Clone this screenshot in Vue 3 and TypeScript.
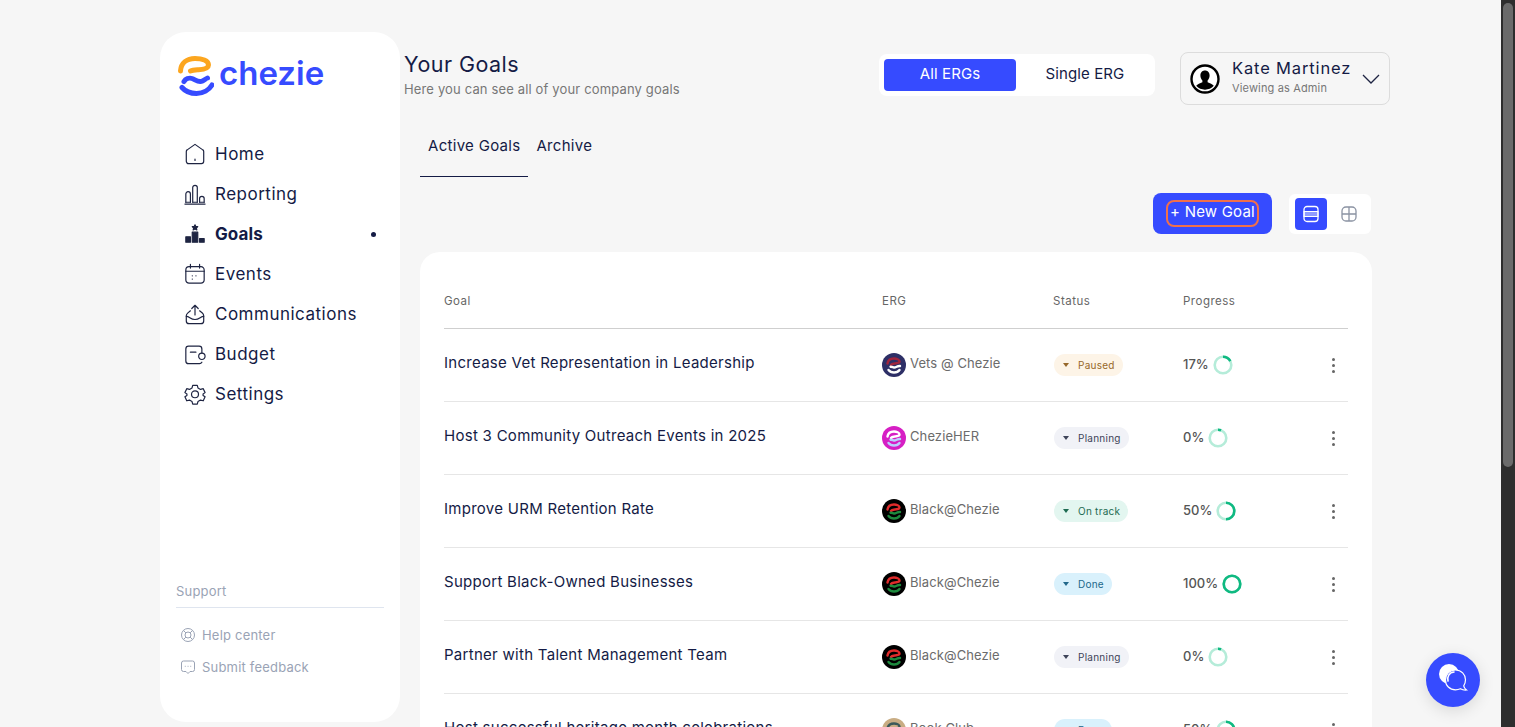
<template>
  <div class="shell">
    <div class="page">
      <aside class="sidebar">
        <div class="logo">
          <svg class="logo-mark" viewBox="0 0 36 40" fill="none" stroke-width="5" stroke-linecap="round" stroke-linejoin="round">
            <path stroke="#fca61f" d="M2.500 15C3 7 9 2.500 17 2.500c7 0 13.500 2 13.500 6.500 0 4-6 4.500-10 4.800-3 .2-6 .3-8 1.200" />
            <path stroke="#364bff" d="M6 25.500c1.500-2.500 5-4 8-3 3.500 1.200 6.500 4.500 10.500 2.500 2-1 3.500-2.500 5-3" />
            <path stroke="#364bff" d="M4 31.500c3 3.500 9 6 14.500 6 6.500 0 12.500-3.500 15.500-8.500" />
          </svg>
          <span class="logo-text">chezie</span>
        </div>

        <nav class="nav">
          <a v-for="item in navItems" :key="item.label" class="nav-item" :class="{ 'nav-item--active': item.active }">
            <svg class="nav-icon" viewBox="0 0 24 24" fill="none" stroke="#1e2442" stroke-width="1.3" stroke-linecap="round" stroke-linejoin="round">
              <path v-for="d in item.paths" :key="d" :d="d" />
              <path v-if="item.active" fill="#1e2442" d="M12 2l1 2h2l-1.500 1.500.5 2-2-1-2 1 .5-2L9 4h2zM9 10h6v11H9zM2 15h5v6H2zM17 17h5v4h-5z" />
            </svg>
            <span>{{ item.label }}</span>
            <i v-if="item.active" class="nav-dot" />
          </a>
        </nav>

        <div class="support">
          <div class="support-title">Support</div>
          <a class="support-link">
            <svg viewBox="0 0 16 16" fill="none" stroke="#9aa3b5" stroke-width="1">
              <circle cx="8" cy="8" r="6.500" />
              <circle cx="8" cy="8" r="3" />
              <path d="M3.500 3.500l2.400 2.400M12.500 3.500l-2.400 2.400M3.500 12.500l2.400-2.400M12.500 12.500l-2.400-2.400" />
            </svg>
            Help center
          </a>
          <a class="support-link">
            <svg viewBox="0 0 16 16" fill="none" stroke="#9aa3b5" stroke-width="1" stroke-linejoin="round">
              <path d="M3.500 2h9A2 2 0 0 1 14.500 4v6.500a2 2 0 0 1-2 2H10L8 14.500 6 12.500H3.500a2 2 0 0 1-2-2V4a2 2 0 0 1 2-2z" />
              <path stroke-linecap="round" d="M5.200 7.300h.1M8 7.300h.1M10.700 7.300h.1" />
            </svg>
            Submit feedback
          </a>
        </div>
      </aside>

      <main class="main">
        <header class="topbar">
          <div class="heading">
            <h1>Your Goals</h1>
            <p>Here you can see all of your company goals</p>
          </div>
          <div class="segmented">
            <button class="segment segment--active">All ERGs</button>
            <button class="segment">Single ERG</button>
          </div>
          <div class="user">
            <svg class="user-avatar" viewBox="0 0 30 30">
              <circle cx="15" cy="15" r="13.500" fill="#fff" stroke="#000" stroke-width="2.400" />
              <path d="M15 6.500c-3 0-4.600 2.300-4.600 5 0 2 .8 3.800 2 5v1.700c-2.300 1-5 1.800-6.200 3.600a12 12 0 0 0 17.600 0c-1.200-1.800-3.900-2.600-6.200-3.600v-1.700c1.200-1.200 2-3 2-5 0-2.700-1.600-5-4.600-5z" />
            </svg>
            <div class="user-text">
              <strong>Kate Martinez</strong>
              <span>Viewing as Admin</span>
            </div>
            <svg class="user-chevron" viewBox="0 0 18 10" fill="none" stroke="#1e2442" stroke-width="1.300">
              <path d="M1 1l8 8 8-8" />
            </svg>
          </div>
        </header>

        <div class="content">
          <div class="tabs">
            <a class="tab tab--active">Active Goals</a>
            <a class="tab">Archive</a>
          </div>

          <div class="actions">
            <button class="new-goal"><span>+ New Goal</span></button>
            <div class="view-toggle">
              <span class="view-btn view-btn--active">
                <svg viewBox="0 0 18 18" fill="none" stroke="#fff" stroke-width="1.300">
                  <rect x="2" y="1.500" width="14" height="15" rx="3" />
                  <rect x="2" y="6.500" width="14" height="5" fill="#fff" fill-opacity=".45" stroke-width="1" />
                </svg>
              </span>
              <span class="view-btn">
                <svg viewBox="0 0 18 18" fill="none" stroke="#8b93a3" stroke-width="1.300">
                  <rect x="2" y="2" width="14" height="14" rx="4" />
                  <path d="M9 2v14M2 9h14" />
                </svg>
              </span>
            </div>
          </div>

          <section class="card">
            <div class="row row--head">
              <span>Goal</span>
              <span>ERG</span>
              <span>Status</span>
              <span>Progress</span>
            </div>
            <div v-for="goal in goals" :key="goal.title" class="row">
              <span class="goal-title">{{ goal.title }}</span>
              <span class="erg">
                <svg class="erg-logo" viewBox="0 0 24 24" fill="none" stroke-width="2.400" stroke-linecap="round">
                  <circle cx="12" cy="12" r="12" :fill="ergColors[goal.erg].bg" stroke="none" />
                  <path :stroke="ergColors[goal.erg].top" d="M5.500 10.500C6 7 9 5.500 12 5.500c2.500 0 5.500 1 5.500 3s-3 1.500-5 2c-1.500.3-3 .7-3.500 1.500" />
                  <path :stroke="ergColors[goal.erg].low" d="M18 13c-2.500-.5-4 1.800-6 1.500-1.200-.2-2-1-3.500-.8M6.500 17c1.200 1.500 3.500 2.500 5.500 2.500s4.500-1 5.500-2.500" />
                </svg>
                <span class="erg-name">{{ goal.erg }}</span>
              </span>
              <span class="status-cell">
                <span class="badge" :class="`badge--${goal.status}`">
                  <i class="caret" /><span>{{ statusLabels[goal.status] }}</span>
                </span>
              </span>
              <span class="progress">
                <span class="progress-value">{{ goal.progress }}%</span>
                <svg class="ring" viewBox="0 0 20 20" fill="none" stroke-width="2.600">
                  <circle cx="10" cy="10" r="8.300" stroke="#b5ecd9" />
                  <circle
                    cx="10"
                    cy="10"
                    r="8.300"
                    stroke="#0fb981"
                    pathLength="100"
                    :stroke-dasharray="`${Math.max(goal.progress, 6)} 100`"
                    transform="rotate(-90 10 10)"
                  />
                </svg>
              </span>
              <span class="kebab"><i /><i /><i /></span>
            </div>
          </section>
        </div>
      </main>

      <button class="chat">
        <svg viewBox="0 0 54 54" fill="none">
          <circle cx="23" cy="21" r="10" fill="#fff" />
          <path fill="#364bff" stroke="#fff" stroke-width="1.200" d="M29.500 17c5.800 0 10 4.300 10 9.800 0 2.400-.6 4.300-1.800 6 .3 1.500 1.300 3 2.800 4.200-2.300.2-4.400-.3-6-1.300-1.500.7-3.200 1.100-5 1.100-5.800 0-10-4.200-10-9.900S23.700 17 29.500 17z" />
          <path stroke="#fff" stroke-width="1.600" stroke-linecap="round" d="M22 28c-1-4 1-8.500 6-9" />
        </svg>
      </button>
    </div>
    <div class="scrollbar"><div class="scrollbar-thumb" /></div>
  </div>
</template>

<script setup lang="ts">
type Status = 'paused' | 'planning' | 'track' | 'done'

interface Goal {
  title: string
  erg: string
  status: Status
  progress: number
}

const navItems = [
  {
    label: 'Home',
    paths: ['M12 1.500l8.500 6a2 2 0 0 1 1 1.700V20a2.500 2.500 0 0 1-2.500 2.500H5A2.500 2.500 0 0 1 2.500 20V9.200a2 2 0 0 1 1-1.700z', 'M12 17.500v1.500'],
  },
  {
    label: 'Reporting',
    paths: [
      'M1 23h22',
      'M2 21v-9a2.500 2.500 0 0 1 5 0v9',
      'M9.500 21V5a2.500 2.500 0 0 1 5 0v16',
      'M17 21v-4a2.500 2.500 0 0 1 5 0v4',
      'M2 21h5M9.500 21h5M17 21h5',
    ],
  },
  { label: 'Goals', active: true, paths: [] },
  {
    label: 'Events',
    paths: [
      'M5.500 4h13A3.500 3.500 0 0 1 22 7.500v11a3.500 3.500 0 0 1-3.500 3.500h-13A3.500 3.500 0 0 1 2 18.500v-11A3.500 3.500 0 0 1 5.500 4z',
      'M2 9h20M7 1.500v4M17 1.500v4',
      'M9 14h.1M13 14h.1M9 17.500h.1',
    ],
  },
  {
    label: 'Communications',
    paths: [
      'M7 8.500L4 11a4 4 0 0 0-1.500 3v5.500a3 3 0 0 0 3 3h13a3 3 0 0 0 3-3V14A4 4 0 0 0 20 11l-3-2.500',
      'M2.500 14.500c3.500 0 4.500 3.500 9.500 3.500s6-3.500 9.500-3.500',
      'M12 13V2.500M8.500 6L12 2.500 15.500 6',
    ],
  },
  {
    label: 'Budget',
    paths: [
      'M19.500 11V6.500a3 3 0 0 0-3-3H5a3 3 0 0 0-3 3v13a3 3 0 0 0 3 3h12a3 3 0 0 0 2.500-1.500',
      'M7 10h6',
      'M19.500 11a3.500 3.500 0 1 1 0 7 3.500 3.500 0 0 1 0-7z',
    ],
  },
  {
    label: 'Settings',
    paths: [
      'M9.500 2.500h5l.8 3 2.700 1.500 3-.8 2 4.300-2.200 1.500v1.600l2.200 1.500-2 4.300-3-.8-2.700 1.500-.8 3h-5l-.8-3L6 18.600l-3 .8-2-4.300 2.200-1.500V12L1 10.500l2-4.300 3 .8L8.700 5.500z',
      'M12 8.500a3.800 3.800 0 1 1 0 7.600 3.800 3.800 0 0 1 0-7.600z',
    ],
  },
]

const statusLabels: Record<Status, string> = {
  paused: 'Paused',
  planning: 'Planning',
  track: 'On track',
  done: 'Done',
}

const ergColors: Record<string, { bg: string; top: string; low: string }> = {
  'Vets @ Chezie': { bg: '#2d2f66', top: '#a0243c', low: '#ffffff' },
  ChezieHER: { bg: '#d61fc4', top: '#ffffff', low: '#b9d0ff' },
  'Black@Chezie': { bg: '#000000', top: '#e02b2b', low: '#1d8a3e' },
  'Book Club': { bg: '#c9ad84', top: '#3b5a5a', low: '#3b5a5a' },
}

const goals: Goal[] = [
  { title: 'Increase Vet Representation in Leadership', erg: 'Vets @ Chezie', status: 'paused', progress: 17 },
  { title: 'Host 3 Community Outreach Events in 2025', erg: 'ChezieHER', status: 'planning', progress: 0 },
  { title: 'Improve URM Retention Rate', erg: 'Black@Chezie', status: 'track', progress: 50 },
  { title: 'Support Black-Owned Businesses', erg: 'Black@Chezie', status: 'done', progress: 100 },
  { title: 'Partner with Talent Management Team', erg: 'Black@Chezie', status: 'planning', progress: 0 },
  { title: 'Host successful heritage month celebrations', erg: 'Book Club', status: 'done', progress: 50 },
]
</script>

<style>
html,
body {
  margin: 0;
  overflow: hidden;
}
</style>

<style scoped>
.shell {
  display: flex;
  height: 727px;
  overflow: hidden;
  background: #f6f6f6;
  font-family: Inter, 'Noto Sans', sans-serif;
  color: #141b45;
}

.page {
  position: relative;
  flex: 1;
  display: flex;
  align-items: flex-start;
  padding: 32px 0 0 160px;
}

.scrollbar {
  width: 14px;
  height: 100%;
  padding: 3px 2px 0;
  box-sizing: border-box;
  background: #2e2e2e;
}

.scrollbar-thumb {
  height: 464px;
  border-radius: 5px;
  background: #6b6b6b;
}

.sidebar {
  flex: none;
  display: flex;
  flex-direction: column;
  box-sizing: border-box;
  width: 240px;
  height: 690px;
  padding: 24px 16px 0 18px;
  border-radius: 26px;
  background: #fff;
}

.logo {
  display: flex;
  align-items: center;
  height: 40px;
}

.logo-mark {
  flex: none;
  width: 36px;
  height: 40px;
}

.logo-text {
  margin-left: 5px;
  padding-bottom: 6px;
  color: #364bff;
  font-size: 33px;
  font-weight: 600;
}

.nav {
  margin-top: 38px;
  padding-left: 7px;
}

.nav-item {
  display: flex;
  align-items: center;
  gap: 8px;
  height: 40px;
  font-size: 17px;
  letter-spacing: 0.5px;
}

.nav-item--active {
  font-weight: 700;
  letter-spacing: 0.1px;
}

.nav-icon {
  width: 22px;
  height: 22px;
  margin-left: -1px;
  margin-right: 1px;
}

.nav-dot {
  width: 5px;
  height: 5px;
  margin-left: auto;
  margin-right: 8px;
  border-radius: 50%;
  background: #141b45;
}

.support {
  margin-top: auto;
  margin-left: -2px;
  padding-bottom: 39px;
  color: #9aa3b5;
  font-size: 13px;
  letter-spacing: 0.2px;
}

.support-title {
  height: 26px;
  line-height: 20px;
  margin-bottom: 11px;
  border-bottom: 1px solid #dfe5ef;
}

.support-link {
  display: flex;
  align-items: center;
  gap: 6px;
  height: 32px;
  padding-left: 4px;
}

.support-link svg {
  width: 16px;
  height: 16px;
}

.main {
  flex: 1;
  padding-left: 4px;
  min-width: 0;
}

.topbar {
  display: flex;
  align-items: flex-start;
  width: 986px;
  padding-top: 20px;
}

.heading {
  flex: 1;
  margin-top: -1px;
}

.heading h1 {
  margin: 0;
  font-size: 21.500px;
  font-weight: 400;
  line-height: 26px;
  letter-spacing: 0.45px;
}

.heading p {
  margin: 3px 0 0;
  color: #777;
  font-size: 13px;
  line-height: 18px;
  letter-spacing: 0.15px;
}

.segmented {
  display: flex;
  gap: 3px;
  margin-top: 2px;
  padding: 5px 4px 5px 5px;
  border-radius: 8px;
  background: #fff;
}

.segment {
  width: 132px;
  height: 32px;
  padding: 0 0 3px;
  border: 0;
  border-radius: 4px;
  background: transparent;
  color: #141b45;
  font: 400 15px Inter, 'Noto Sans', sans-serif;
  letter-spacing: 0.1px;
}

.segment--active {
  background: #364bff;
  color: #fff;
}

.user {
  display: flex;
  align-items: center;
  box-sizing: border-box;
  width: 210px;
  height: 53px;
  margin-left: 25px;
  padding: 0 9px;
  border: 1px solid #dcdcdc;
  border-radius: 8px;
}

.user-avatar {
  flex: none;
  width: 30px;
  height: 30px;
}

.user-text {
  flex: 1;
  display: flex;
  flex-direction: column;
  margin-left: 12px;
}

.user-text strong {
  font-size: 16.500px;
  font-weight: 400;
  line-height: 20px;
  margin-top: -3px;
  letter-spacing: 0.85px;
}

.user-text span {
  margin-top: 3px;
  color: #777;
  font-size: 11px;
  line-height: 15px;
  letter-spacing: 0.15px;
}

.user-chevron {
  width: 18px;
  height: 10px;
}

.content {
  width: 952px;
  padding-left: 16px;
}

.tabs {
  display: flex;
  margin-top: 19px;
  height: 53px;
  box-sizing: border-box;
}

.tab {
  padding: 0 8px;
  font-size: 15px;
  line-height: 44px;
  letter-spacing: 0.3px;
}

.tab--active {
  border-bottom: 1px solid #141b45;
}

.actions {
  display: flex;
  align-items: center;
  justify-content: flex-end;
  gap: 17px;
  margin-top: 16px;
  height: 41px;
  padding-right: 1px;
}

.new-goal {
  box-sizing: border-box;
  width: 119px;
  height: 41px;
  padding: 0 0 1px;
  border: 0;
  border-radius: 8px;
  background: #364bff;
  color: #fff;
  font: 400 15px Inter, 'Noto Sans', sans-serif;
  letter-spacing: 0.2px;
}

.new-goal span {
  display: inline-block;
  padding: 1px 2px 5px;
  border: 2.500px solid #f0704a;
  border-radius: 8px;
  line-height: 17px;
}

.view-toggle {
  display: flex;
  gap: 6px;
  box-sizing: border-box;
  width: 82px;
  height: 40px;
  padding: 4px 6px;
  border-radius: 6px;
  background: #fff;
}

.view-btn {
  display: flex;
  align-items: center;
  justify-content: center;
  width: 32px;
  height: 32px;
  border-radius: 4px;
}

.view-btn svg {
  width: 18px;
  height: 18px;
}

.view-btn--active {
  background: #364bff;
}

.card {
  margin-top: 18px;
  padding: 12px 24px 0;
  border-radius: 20px;
  background: #fff;
}

.row {
  display: grid;
  grid-template-columns: 438px 171px 130px 1fr 30px;
  align-items: center;
  height: 73px;
  box-sizing: border-box;
  border-bottom: 1px solid #e6e6e6;
}

.row--head {
  height: 65px;
  padding-top: 10px;
  border-bottom-color: #cfcfcf;
  color: #666;
  font-size: 11.500px;
  letter-spacing: 0.5px;
}

.goal-title {
  padding-bottom: 6px;
  font-size: 15px;
  font-weight: 400;
  letter-spacing: 0.28px;
}

.erg {
  display: flex;
  align-items: center;
  gap: 4px;
  color: #6b6b6b;
  font-size: 13px;
  letter-spacing: 0.1px;
}

.erg-name {
  padding-bottom: 4px;
}

.erg-logo {
  width: 24px;
  height: 24px;
}

.status-cell {
  display: flex;
  padding-left: 1px;
}

.badge {
  display: inline-flex;
  align-items: center;
  height: 22px;
  padding: 0 8px 0 9px;
  border-radius: 11px;
  font-size: 10px;
  letter-spacing: 0.25px;
}

.caret {
  width: 0;
  height: 0;
  margin-right: 9px;
  border: 3px solid transparent;
  border-top: 4px solid currentColor;
  border-bottom: 0;
}

.badge--paused {
  background: #fdf4e7;
  color: #96682a;
}

.badge--planning {
  background: #f1f2f7;
  color: #3e4459;
}

.badge--track {
  background: #e3f6f0;
  color: #1d6b52;
}

.badge--done {
  background: #d9f1fc;
  color: #22688a;
}

.progress {
  display: flex;
  align-items: center;
  gap: 4px;
  color: #555;
  font-size: 13px;
  font-weight: 500;
}

.progress-value {
  padding-bottom: 2px;
}

.ring {
  width: 20px;
  height: 20px;
}

.kebab {
  display: flex;
  flex-direction: column;
  align-items: center;
  gap: 3px;
}

.kebab i {
  width: 3px;
  height: 3px;
  border-radius: 50%;
  background: #666;
}

.chat {
  position: absolute;
  top: 653px;
  right: 21px;
  display: flex;
  width: 54px;
  height: 54px;
  padding: 0;
  border: 0;
  border-radius: 50%;
  background: #364bff;
  box-shadow: 0 4px 16px rgba(0, 0, 0, 0.12);
}

.chat svg {
  width: 54px;
  height: 54px;
}
</style>
